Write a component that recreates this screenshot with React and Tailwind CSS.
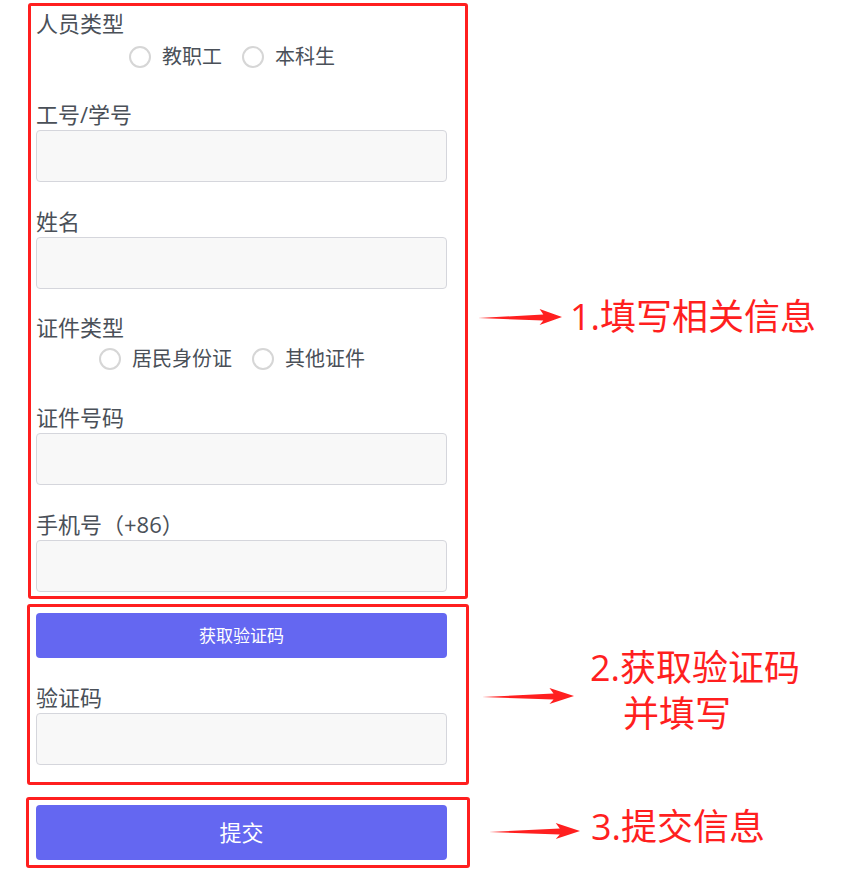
const font = { fontFamily: '"Open Sans", "Noto Sans CJK SC", sans-serif' };

const Arrow = ({ width }) => (
  <svg width={width} height="18" viewBox="0 0 90 18" preserveAspectRatio="none" className="shrink-0">
    <polygon points="0,10 70,6.5 66,1 90,9 66,17 70,12.5" fill="#ff1f1f" />
  </svg>
);

const Label = ({ children }) => (
  <div className="h-[32px] text-[22px] leading-[32px] text-[#4a5058]">{children}</div>
);

const Field = ({ label, className = "" }) => (
  <div className={className}>
    <Label>{label}</Label>
    <input className="block h-[52px] w-[411px] rounded-[4px] border border-[#d5d6dc] bg-[#f8f8f8] outline-none" />
  </div>
);

const Radio = ({ label }) => (
  <label className="flex items-center gap-[11px]">
    <span className="h-[22px] w-[22px] rounded-full border-2 border-[#d6d6d6] bg-white" />
    <span className="text-[20px] text-[#4a5058]">{label}</span>
  </label>
);

const RadioGroup = ({ label, options, className = "", rowClass = "" }) => (
  <div className={className}>
    <Label>{label}</Label>
    <div className={`flex h-[32px] w-[411px] items-center justify-center gap-[20px] pr-[19px] ${rowClass}`}>
      {options.map((o) => (
        <Radio key={o} label={o} />
      ))}
    </div>
  </div>
);

const Note = ({ children }) => (
  <div className="text-[36px] leading-[46px] text-[#ff1f1f]">{children}</div>
);

export default function App() {
  return (
    <div className="min-h-[879px] bg-white pl-[26px] pt-[3px]" style={font}>
      {/* step 1 */}
      <div className="flex items-center">
        <div className="ml-[2px] w-[440px] rounded-[3px] border-[3px] border-[#ff1f1f] pb-[4px] pl-[5px] pt-[1px]">
          <RadioGroup label="人员类型" options={["教职工", "本科生"]} rowClass="mt-[2px]" />
          <Field label="工号/学号" className="mt-[25px]" />
          <Field label="姓名" className="mt-[23px]" />
          <RadioGroup label="证件类型" options={["居民身份证", "其他证件"]} className="mt-[22px]" />
          <Field label="证件号码" className="mt-[26px]" />
          <Field label="手机号（+86）" className="mt-[23px]" />
        </div>
        <div className="ml-[10px] mt-[31px] flex items-center gap-[8px]">
          <Arrow width={84} />
          <Note>1.填写相关信息</Note>
        </div>
      </div>

      {/* step 2 */}
      <div className="mt-[5px] flex items-center">
        <div className="ml-[1px] w-[442px] rounded-[3px] border-[3px] border-[#ff1f1f] pb-[17px] pl-[6px] pt-[6px]">
          <button className="block h-[45px] w-[411px] rounded-[4px] bg-[#6467f1] text-[17px] text-white">
            获取验证码
          </button>
          <Field label="验证码" className="mt-[23px]" />
        </div>
        <div className="mb-[8px] ml-[13px] flex items-center gap-[16px]">
          <div className="mt-[11px]">
            <Arrow width={92} />
          </div>
          <div>
            <Note>2.获取验证码</Note>
            <Note>
              <span className="pl-[33px]">并填写</span>
            </Note>
          </div>
        </div>
      </div>

      {/* step 3 */}
      <div className="mt-[12px] flex items-center">
        <div className="w-[444px] rounded-[3px] border-[3px] border-[#ff1f1f] py-[5px] pl-[7px]">
          <button className="block h-[55px] w-[411px] rounded-[4px] bg-[#6467f1] text-[22px] text-white">
            提交
          </button>
        </div>
        <div className="mb-[12px] ml-[19px] flex items-center gap-[11px]">
          <div className="mt-[8px]">
            <Arrow width={91} />
          </div>
          <Note>3.提交信息</Note>
        </div>
      </div>
    </div>
  );
}
